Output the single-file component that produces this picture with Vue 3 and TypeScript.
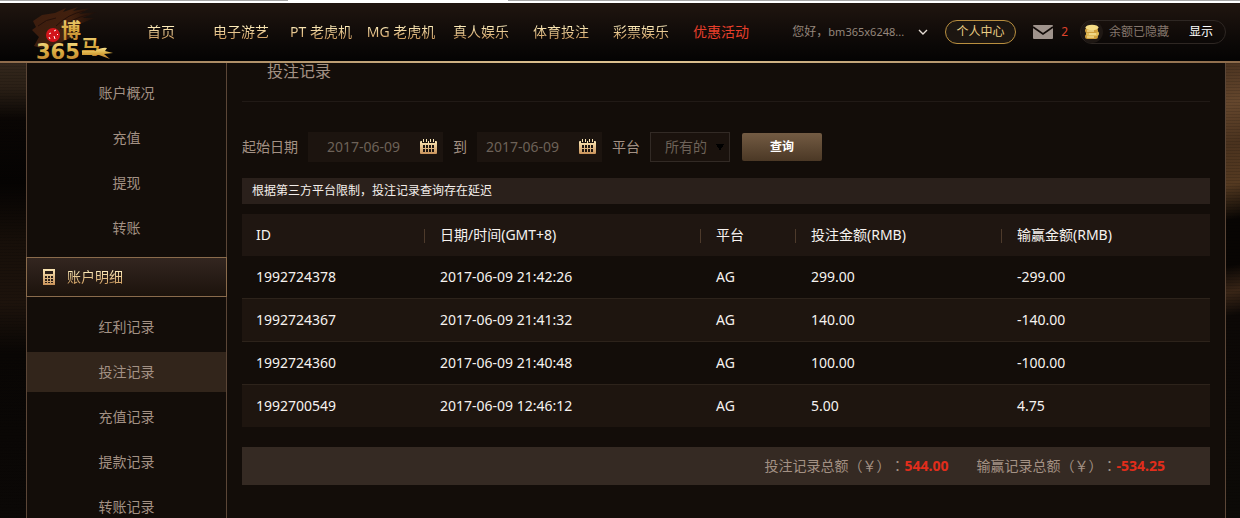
<script setup lang="ts">
import { ref } from 'vue'

interface NavItem {
  label: string
  hot?: boolean
}
interface BetRecord {
  id: string
  time: string
  platform: string
  stake: string
  result: string
}

const navItems: NavItem[] = [
  { label: '首页' },
  { label: '电子游艺' },
  { label: 'PT 老虎机' },
  { label: 'MG 老虎机' },
  { label: '真人娱乐' },
  { label: '体育投注' },
  { label: '彩票娱乐' },
  { label: '优惠活动', hot: true },
]
const accountLinks: string[] = ['账户概况', '充值', '提现', '转账']
const recordLinks: string[] = ['红利记录', '投注记录', '充值记录', '提款记录', '转账记录']
const activeRecord = ref('投注记录')

const startDate = ref('2017-06-09')
const endDate = ref('2017-06-09')
const platform = ref('所有的')

const columns: string[] = ['ID', '日期/时间(GMT+8)', '平台', '投注金额(RMB)', '输赢金额(RMB)']
const records: BetRecord[] = [
  { id: '1992724378', time: '2017-06-09 21:42:26', platform: 'AG', stake: '299.00', result: '-299.00' },
  { id: '1992724367', time: '2017-06-09 21:41:32', platform: 'AG', stake: '140.00', result: '-140.00' },
  { id: '1992724360', time: '2017-06-09 21:40:48', platform: 'AG', stake: '100.00', result: '-100.00' },
  { id: '1992700549', time: '2017-06-09 12:46:12', platform: 'AG', stake: '5.00', result: '4.75' },
]
const totals = [
  { label: '投注记录总额', value: '544.00' },
  { label: '输赢记录总额', value: '-534.25' },
]
</script>

<template>
  <div class="page">
    <div class="strip"></div>
    <header class="top">
      <a class="logo" href="#" aria-label="博马365">
        <svg width="92" height="58" viewBox="0 -3 92 58" aria-hidden="true">
          <defs>
            <linearGradient id="gold" x1="0" y1="0" x2="0" y2="1">
              <stop offset="0" stop-color="#f6e08a" />
              <stop offset="0.5" stop-color="#d9a93f" />
              <stop offset="1" stop-color="#b9772c" />
            </linearGradient>
            <linearGradient id="mane" x1="0" y1="0" x2="1" y2="0">
              <stop offset="0" stop-color="#3c1d0e" />
              <stop offset="0.6" stop-color="#42200e" />
              <stop offset="1" stop-color="#1a0e08" />
            </linearGradient>
          </defs>
          <path
            d="M8 40 L13 31 L6 24 L10 21 L7 15 L16 9 L29 7 L40 2 L37 6 L52 1 L47 5 L64 2 L53 8 L71 6 L56 12 L68 12 L54 18 L46 31 L30 39 L15 42 Z"
            fill="url(#mane)"
          />
          <path d="M30 20 Q42 8 58 5 M34 23 Q46 12 62 9 M12 20 Q20 13 30 12" fill="none" stroke="#241009" stroke-width="1" />
          <circle cx="27" cy="29" r="7" fill="#d3141b" />
          <path d="M23 28l2 -1M28 25l2 -1M23 31l1 2M28 30l1 3M31 28l1 1" stroke="#fff" stroke-width="1" />
          <text x="35" y="32" font-size="20" class="mark">博</text>
          <text x="55" y="48" font-size="19" class="mark">马</text>
          <path d="M56 45 H69 Q76 41 81 42 L79 45 L87 47 L78 48 L84 53 L73 49 H56 Z" fill="url(#gold)" />
          <text x="10" y="53" font-size="21" class="digits">365</text>
        </svg>
      </a>
      <nav class="nav">
        <a v-for="item in navItems" :key="item.label" href="#" :class="{ hot: item.hot }">{{ item.label }}</a>
      </nav>
      <div class="user">
        <button class="greeting" type="button">
          <span>您好，<span class="name">bm365x6248...</span></span>
          <svg width="10" height="7" viewBox="0 0 10 7" aria-hidden="true">
            <path d="M1 1l4 4 4-4" fill="none" stroke="#e4dcd4" stroke-width="1.4" />
          </svg>
        </button>
        <a class="center" href="#">个人中心</a>
        <a class="mail" href="#" aria-label="消息">
          <svg width="20" height="14" viewBox="0 0 20 14" aria-hidden="true">
            <rect width="20" height="14" rx="1" fill="#9f938c" />
            <path d="M0 2l10 7 10-7" fill="none" stroke="#110b08" stroke-width="1.6" />
          </svg>
          <span>2</span>
        </a>
        <div class="balance">
          <span class="coin">
            <svg width="16" height="16" viewBox="0 0 16 16" aria-hidden="true">
              <rect x="1" y="10" width="13" height="5" rx="2.5" fill="#cf9f3c" />
              <rect x="2" y="7" width="13" height="5" rx="2.5" fill="#e2bd5a" />
              <rect x="1" y="4" width="13" height="5" rx="2.5" fill="#cf9f3c" />
              <ellipse cx="8" cy="3.5" rx="6.5" ry="2.8" fill="#f4dc85" />
              <path d="M3 7h7M5 10h7M3 13h7" stroke="#fff0b0" stroke-width="1" />
            </svg>
          </span>
          <span class="hidden-sum">余额已隐藏</span>
          <button type="button">显示</button>
        </div>
      </div>
    </header>

    <div class="body">
      <aside class="side">
        <a v-for="link in accountLinks" :key="link" href="#">{{ link }}</a>
        <h2>
          <svg width="12" height="16" viewBox="0 0 12 16" aria-hidden="true">
            <defs>
              <linearGradient id="calc" x1="0" y1="0" x2="0" y2="1">
                <stop offset="0" stop-color="#fbe6b4" />
                <stop offset="1" stop-color="#c8925a" />
              </linearGradient>
            </defs>
            <rect width="12" height="16" fill="url(#calc)" />
            <path
              fill="#2a1e17"
              d="M2 2h8v3H2zM2 7h2v2H2zM5 7h2v2H5zM8 7h2v2H8zM2 10h2v2H2zM5 10h2v2H5zM8 10h2v2H8zM2 13h2v1H2zM5 13h2v1H5zM8 13h2v1H8z"
            />
          </svg>
          <span>账户明细</span>
        </h2>
        <a
          v-for="link in recordLinks"
          :key="link"
          href="#"
          :class="{ active: link === activeRecord }"
          @click.prevent="activeRecord = link"
        >{{ link }}</a>
      </aside>

      <main class="content">
        <h1>投注记录</h1>
        <form class="filters" @submit.prevent>
          <label for="start">起始日期</label>
          <div class="date wide">
            <input id="start" v-model="startDate" type="text" />
            <button type="button" aria-label="选择起始日期">
              <svg width="17" height="15" viewBox="0 0 17 15" aria-hidden="true">
                <rect y="2" width="17" height="13" rx="1" fill="url(#calc)" />
                <path fill="#1c140f" d="M2 2h3v2H2zM5 2h3v2H5zM9 2h3v2H9zM12 2h3v2h-3zM3 6h2v3H3zM6 6h2v3H6zM9 6h2v3H9zM12 6h2v3h-2zM3 10h2v3H3zM6 10h2v3H6zM9 10h2v3H9zM12 10h2v3h-2z" />
                <path fill="#fbe6b4" d="M3 0h1v3H3zM6 0h1v3H6zM10 0h1v3h-1zM13 0h1v3h-1z" />
              </svg>
            </button>
          </div>
          <label for="end">到</label>
          <div class="date">
            <input id="end" v-model="endDate" type="text" />
            <button type="button" aria-label="选择结束日期">
              <svg width="17" height="15" viewBox="0 0 17 15" aria-hidden="true">
                <rect y="2" width="17" height="13" rx="1" fill="url(#calc)" />
                <path fill="#1c140f" d="M2 2h3v2H2zM5 2h3v2H5zM9 2h3v2H9zM12 2h3v2h-3zM3 6h2v3H3zM6 6h2v3H6zM9 6h2v3H9zM12 6h2v3h-2zM3 10h2v3H3zM6 10h2v3H6zM9 10h2v3H9zM12 10h2v3h-2z" />
                <path fill="#fbe6b4" d="M3 0h1v3H3zM6 0h1v3H6zM10 0h1v3h-1zM13 0h1v3h-1z" />
              </svg>
            </button>
          </div>
          <label for="platform">平台</label>
          <select id="platform" v-model="platform">
            <option>所有的</option>
            <option>AG</option>
          </select>
          <button class="search" type="submit">查询</button>
        </form>
        <p class="notice">根据第三方平台限制，投注记录查询存在延迟</p>
        <table>
          <thead>
            <tr>
              <th v-for="column in columns" :key="column" scope="col">{{ column }}</th>
            </tr>
          </thead>
          <tbody>
            <tr v-for="record in records" :key="record.id">
              <td>{{ record.id }}</td>
              <td>{{ record.time }}</td>
              <td>{{ record.platform }}</td>
              <td>{{ record.stake }}</td>
              <td>{{ record.result }}</td>
            </tr>
          </tbody>
        </table>
        <div class="totals">
          <span v-for="total in totals" :key="total.label">{{ total.label }}<span class="mid">（￥）：</span><strong>{{ total.value }}</strong></span>
        </div>
      </main>
    </div>
  </div>
</template>

<style>
body {
  margin: 0;
  background: #080503;
}
</style>

<style scoped>
* {
  box-sizing: border-box;
}
.page {
  display: flex;
  flex-direction: column;
  height: 100vh;
  overflow: hidden;
  font-family: 'Noto Sans', 'Noto Sans CJK SC', sans-serif;
  font-size: 14px;
  line-height: 20px;
  color: #a39184;
  text-spacing-trim: space-all;
}
a {
  color: inherit;
  text-decoration: none;
}
button,
input,
select {
  margin: 0;
  padding: 0;
  border: 0;
  background: none;
  color: inherit;
  font: inherit;
}
button {
  cursor: pointer;
}
svg {
  display: block;
  flex: none;
  overflow: visible;
}
/* Full-width punctuation centred in its cell */
.mid {
  font-family: 'Noto Sans CJK TC', sans-serif;
  line-height: 1;
}
.strip {
  flex: none;
  height: 3px;
  background:
    linear-gradient(#fff, #fff) 288px 0 / 220px 1px no-repeat,
    linear-gradient(#a6a6a6 1px, #fff 1px);
}

/* Header */
.top {
  display: flex;
  flex: none;
  align-items: center;
  height: 60px;
  padding: 0 14px 0 26px;
  border-bottom: 2px solid;
  border-image: linear-gradient(90deg, #8d6b4b, #dcc08f 45%, #dcc08f 55%, #8d6b4b) 1;
  background: linear-gradient(#20150f, #0e0a08 60%, #040303);
}
.logo {
  flex: none;
  width: 95px;
}
.mark {
  fill: url(#gold);
  font-family: 'Noto Sans CJK SC', sans-serif;
  font-weight: 700;
}
.digits {
  fill: url(#gold);
  font-family: 'DejaVu Sans', sans-serif;
  font-weight: 700;
}
.nav {
  display: flex;
}
.nav a {
  width: 80px;
  background: linear-gradient(#ffeebc 20%, #cf9d60 85%);
  -webkit-background-clip: text;
  background-clip: text;
  color: transparent;
  text-align: center;
  white-space: nowrap;
}
.nav .hot {
  background: none;
  color: #e63f2b;
}
.user {
  display: flex;
  align-items: center;
  margin-left: auto;
  font-size: 12px;
}
.greeting {
  display: flex;
  gap: 14px;
  align-items: center;
  margin-right: 17px;
  color: #95877c;
  white-space: nowrap;
}
.name {
  font-size: 11px;
}
.center {
  width: 71px;
  margin-right: 17px;
  border: 1px solid #b98f3f;
  border-radius: 12px;
  background: #1c1611;
  color: #eccf86;
  line-height: 22px;
  text-align: center;
}
.mail {
  display: flex;
  gap: 8px;
  align-items: center;
  margin-right: 12px;
  color: #dd432c;
}
.balance {
  display: flex;
  align-items: center;
  width: 146px;
  height: 24px;
  border: 1px solid #2e2723;
  border-radius: 12px;
}
.coin {
  display: grid;
  place-items: center;
  width: 22px;
  height: 22px;
  margin-right: 6px;
  border-radius: 11px;
  background: #1f1814;
}
.hidden-sum {
  color: #85776d;
}
.balance button {
  margin-left: auto;
  padding-right: 12px;
  color: #fff;
}

/* Body */
.body {
  display: flex;
  flex: 1;
  min-height: 0;
  padding: 0 14px 0 26px;
  background:
    repeating-linear-gradient(rgba(0, 0, 0, 0.12) 0 1px, transparent 1px 3px),
    linear-gradient(#33271c, #2b2016 24px, #0a0604 56px, #050302 120px, #170f09 180px, #1d130c 240px, #090604 290px, #0b0806) 0 0 / 26px 100% no-repeat,
    linear-gradient(170deg, #4b3320, #65472d 40px, #4a321e 80px, #553a21 120px, #080503 155px, #080503 200px, #3a2617 226px, #0c0806 250px, #0c0a07) 100% 0 / 14px 100% no-repeat,
    #0c0806;
}
.side {
  flex: none;
  width: 201px;
  height: max-content;
  min-height: 100%;
  padding-top: 10px;
  border: solid #5b4637;
  border-width: 0 1px;
  background: #130d09;
}
.side a {
  display: block;
  margin-bottom: 5px;
  line-height: 40px;
  text-align: center;
}
.side .active {
  background: #32251b;
}
.side h2 {
  display: flex;
  gap: 12px;
  align-items: center;
  height: 40px;
  margin: 9px -1px 10px;
  padding-left: 16px;
  border: 1px solid #8a6b4c;
  background: linear-gradient(#332620, #1c130c);
  font-size: 14px;
  font-weight: 400;
}
.side h2 span {
  background: linear-gradient(#ffeebc 20%, #cf9d60 85%);
  -webkit-background-clip: text;
  background-clip: text;
  color: transparent;
}
.content {
  flex: 1;
  min-width: 0;
  padding: 0 15px;
  border-right: 1px solid #5b4637;
  background: #130d09;
}
h1 {
  height: 39px;
  margin: 0 0 30px;
  padding-left: 25px;
  border-bottom: 1px solid #211a16;
  font-size: 16px;
  font-weight: 400;
  line-height: 16px;
}
.filters {
  display: flex;
  align-items: center;
  gap: 10px;
  margin-bottom: 16px;
}
.date {
  display: flex;
  align-items: center;
  width: 125px;
  height: 30px;
  padding: 0 6px 2px 9px;
  background: #1c140f;
  color: #6d6258;
}
.date.wide {
  width: 135px;
  padding-left: 19px;
}
.date input {
  flex: 1;
  min-width: 0;
  padding-top: 2px;
}
select {
  width: 80px;
  height: 30px;
  padding: 0 14px;
  border: 1px solid #322a25;
  appearance: none;
  background:
    linear-gradient(to bottom right, #000 50%, transparent 50%) 69px 11px / 4px 7px no-repeat,
    linear-gradient(to bottom left, #000 50%, transparent 50%) 65px 11px / 4px 7px no-repeat,
    #1a120d;
  color: #6d6258;
}
.search {
  width: 80px;
  height: 28px;
  margin-left: 2px;
  border-radius: 2px;
  background: linear-gradient(#735b43, #4b3825);
  color: #fff;
  font-size: 12px;
  font-weight: 700;
}
.notice {
  margin: 0 0 10px;
  padding: 0 10px;
  background: #2a201b;
  color: #f4efeb;
  font-size: 12px;
  line-height: 26px;
}
table {
  width: 100%;
  border-collapse: separate;
  border-spacing: 0;
  table-layout: fixed;
  color: #f6f2ef;
}
th,
td {
  height: 43px;
  padding: 0 0 0 16px;
  border-top: 1px solid #2d231b;
  text-align: left;
}
th {
  height: 42px;
  border: 0;
  background: linear-gradient(#4d3a2b, #4d3a2b) 0 15px / 1px 14px no-repeat;
  font-weight: 400;
}
th:nth-child(1) {
  width: 182px;
  background: none;
}
th:nth-child(2) {
  width: 276px;
}
th:nth-child(3) {
  width: 95px;
}
th:nth-child(4) {
  width: 206px;
}
th:first-child,
td:first-child {
  padding-left: 14px;
}
thead tr {
  background: #1f1611;
}
tbody tr:first-child td {
  height: 42px;
  border: 0;
}
tbody tr:nth-child(even) {
  background: #1e150f;
}
.totals {
  display: flex;
  justify-content: flex-end;
  gap: 28px;
  margin-top: 20px;
  padding: 0 45px;
  background: #352a23;
  line-height: 38px;
}
.totals strong {
  color: #e22d1b;
}
</style>
